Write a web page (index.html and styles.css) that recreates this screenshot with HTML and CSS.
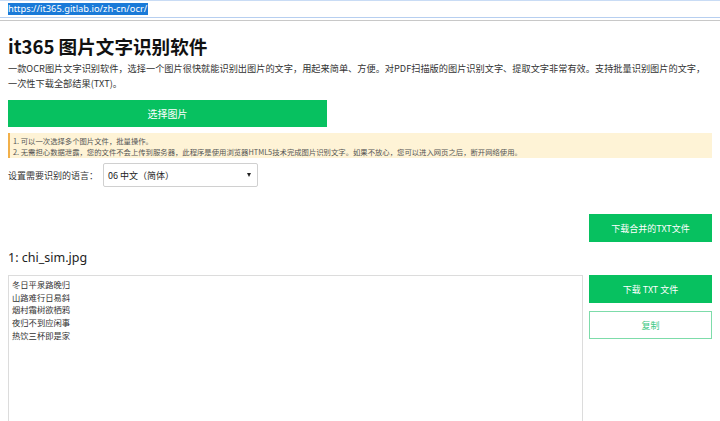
FILE: index.html
```html
<!DOCTYPE html>
<html lang="zh-CN">
<head>
<meta charset="utf-8">
<title>it365 图片文字识别软件</title>
<link rel="stylesheet" href="styles.css">
</head>
<body>
<div class="addr"><span class="url">https://it365.gitlab.io/zh-cn/ocr/</span></div>
<div class="page">
  <h1 class="title">it365 图片文字识别软件</h1>
  <p class="desc">一款OCR图片文字识别软件，选择一个图片很快就能识别出图片的文字，用起来简单、方便。对PDF扫描版的图片识别文字、提取文字非常有效。支持批量识别图片的文字，一次性下载全部结果(TXT)。</p>
  <button class="btn pick">选择图片</button>
  <div class="tip">
    <div>1. 可以一次选择多个图片文件，批量操作。</div>
    <div>2. 无需担心数据泄露，您的文件不会上传到服务器，此程序是使用浏览器HTML5技术完成图片识别文字。如果不放心，您可以进入网页之后，断开网络使用。</div>
  </div>
  <div class="lang">
    <span class="lang-label">设置需要识别的语言：</span>
    <div class="select"><span>06 中文（简体）</span><span class="arrow"></span></div>
  </div>
  <div class="merge-row"><button class="btn side-btn">下载合并的TXT文件</button></div>
  <h2 class="file">1: chi_sim.jpg</h2>
  <div class="result">
    <div class="text">冬日平泉路晚归<br>山路难行日易斜<br>烟村霜树欲栖鸦<br>夜归不到应闲事<br>热饮三杯即是家</div>
    <div class="side">
      <button class="btn side-btn">下载 TXT 文件</button>
      <button class="btn side-btn outline">复制</button>
    </div>
  </div>
</div>
</body>
</html>
```
FILE: styles.css
```css
html, body {
  margin: 0;
  padding: 0;
  background: #fff;
  overflow: hidden;
}
body {
  font-family: "Noto Sans", "Noto Sans CJK SC", sans-serif;
  color: #333;
  height: 421px;
}
.addr {
  height: 16px;
  border-top: 1px solid #c9dcf5;
  border-bottom: 1px solid #b7cff0;
  padding-left: 8px;
  display: flex;
  align-items: center;
  position: relative;
}
.addr::after {
  content: "";
  position: absolute;
  left: 0;
  right: 0;
  top: 19px;
  border-top: 1px solid #c8c8c8;
}
.url {
  background: #1a7ad8;
  color: #fff;
  font-size: 9.3px;
  line-height: 12px;
  height: 12px;
  padding-right: 1px;
  font-family: "Noto Sans", "Noto Sans CJK SC", sans-serif;
}
.page {
  padding: 0 8px;
}
.title {
  margin: 17px 0 0;
  font-size: 18.6px;
  line-height: 22px;
  font-weight: bold;
  color: #111;
  font-family: "Noto Sans CJK SC", sans-serif;
}
.desc {
  margin: 4px 0 0;
  font-size: 9.2px;
  line-height: 15px;
  color: #333;
  font-family: "Noto Sans CJK SC", sans-serif;
}
.btn {
  border: none;
  background: #07c160;
  color: #fff;
  font-family: "Noto Sans CJK SC", sans-serif;
  font-size: 9px;
  padding: 0;
  cursor: pointer;
  display: block;
}
.pick {
  margin-top: 9px;
  width: 319px;
  height: 27px;
  font-size: 10px;
}
.tip {
  margin-top: 6px;
  height: 25px;
  box-sizing: border-box;
  background: #fef3d6;
  border-left: 2px solid #f2b04a;
  padding: 2px 0 0 3px;
  font-size: 7.35px;
  line-height: 11px;
  color: #555;
  font-family: "Noto Sans CJK SC", sans-serif;
}
.lang {
  margin-top: 5px;
  display: flex;
  align-items: center;
  gap: 5px;
  font-family: "Noto Sans CJK SC", sans-serif;
  font-size: 9px;
  color: #333;
}
.select {
  width: 155px;
  height: 24px;
  box-sizing: border-box;
  border: 1px solid #d0d0d0;
  border-radius: 2px;
  display: flex;
  align-items: center;
  justify-content: space-between;
  padding: 0 6px 0 4px;
  color: #222;
}
.arrow {
  width: 0;
  height: 0;
  border-left: 2.5px solid transparent;
  border-right: 2.5px solid transparent;
  border-top: 4px solid #222;
}
.merge-row {
  margin-top: 27px;
  display: flex;
  justify-content: flex-end;
}
.side-btn {
  width: 123px;
  height: 28px;
}
.file {
  margin: 7px 0 0;
  font-size: 12.5px;
  line-height: 18px;
  font-weight: normal;
  color: #222;
}
.result {
  margin-top: 8px;
  display: flex;
  gap: 6px;
}
.text {
  flex: 1;
  height: 200px;
  border: 1px solid #dcdcdc;
  padding: 2px 3px;
  font-size: 8.3px;
  line-height: 12.7px;
  color: #333;
  font-family: "Noto Sans CJK SC", sans-serif;
}
.side {
  display: flex;
  flex-direction: column;
  gap: 8px;
}
.outline {
  background: #fff;
  border: 1px solid #7ddcaa;
  color: #3cc884;
}
```
